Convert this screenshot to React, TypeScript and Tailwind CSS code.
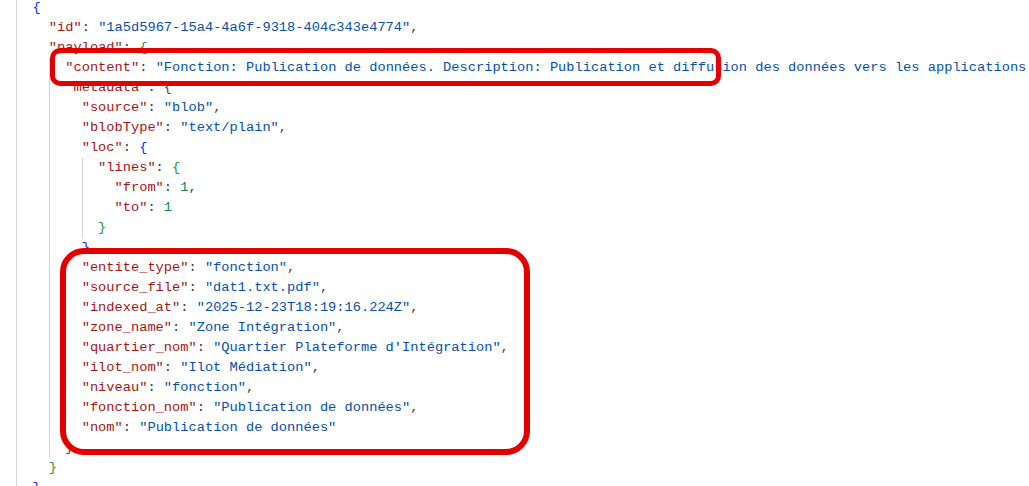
import React from "react";

type Tok = { t: string; c: string };

const K = "text-[#a31515]";
const S = "text-[#0451a5]";
const N = "text-[#098658]";
const P = "text-[#3b3b3b]";
const B1 = "text-[#0431fa]";
const B2 = "text-[#319331]";
const B3 = "text-[#7b3814]";

const kv = (k: string, v: string, comma = true, vc = S): Tok[] => [
  { t: `"${k}"`, c: K },
  { t: ": ", c: P },
  { t: v, c: vc },
  ...(comma ? [{ t: ",", c: P }] : []),
];

const lines: { indent: number; toks: Tok[] }[] = [
  { indent: 2, toks: [{ t: "{", c: B1 }] },
  { indent: 4, toks: kv("id", '"1a5d5967-15a4-4a6f-9318-404c343e4774"') },
  { indent: 4, toks: [{ t: '"payload"', c: K }, { t: ": ", c: P }, { t: "{", c: B2 }] },
  {
    indent: 6,
    toks: kv(
      "content",
      '"Fonction: Publication de données. Description: Publication et diffusion des données vers les applications consommatrices."'
    ),
  },
  { indent: 6, toks: [{ t: '"metadata"', c: K }, { t: ": ", c: P }, { t: "{", c: B3 }] },
  { indent: 8, toks: kv("source", '"blob"') },
  { indent: 8, toks: kv("blobType", '"text/plain"') },
  { indent: 8, toks: [{ t: '"loc"', c: K }, { t: ": ", c: P }, { t: "{", c: B1 }] },
  { indent: 10, toks: [{ t: '"lines"', c: K }, { t: ": ", c: P }, { t: "{", c: B2 }] },
  { indent: 12, toks: kv("from", "1", true, N) },
  { indent: 12, toks: kv("to", "1", false, N) },
  { indent: 10, toks: [{ t: "}", c: B2 }] },
  { indent: 8, toks: [{ t: "}", c: B1 }, { t: ",", c: P }] },
  { indent: 8, toks: kv("entite_type", '"fonction"') },
  { indent: 8, toks: kv("source_file", '"dat1.txt.pdf"') },
  { indent: 8, toks: kv("indexed_at", '"2025-12-23T18:19:16.224Z"') },
  { indent: 8, toks: kv("zone_name", '"Zone Intégration"') },
  { indent: 8, toks: kv("quartier_nom", '"Quartier Plateforme d\'Intégration"') },
  { indent: 8, toks: kv("ilot_nom", '"Ilot Médiation"') },
  { indent: 8, toks: kv("niveau", '"fonction"') },
  { indent: 8, toks: kv("fonction_nom", '"Publication de données"') },
  { indent: 8, toks: kv("nom", '"Publication de données"', false) },
  { indent: 6, toks: [{ t: "}", c: B3 }] },
  { indent: 4, toks: [{ t: "}", c: B2 }] },
  { indent: 2, toks: [{ t: "}", c: B1 }] },
];

function Indent({ n }: { n: number }) {
  const chunks: number[] = [];
  for (let c = 0; c < n; c += 4) chunks.push(Math.min(4, n - c));
  return (
    <>
      {chunks.map((w, i) => (
        <span
          key={i}
          className={
            "inline-block h-[20px] shrink-0 border-l border-[#d4d4d4] " +
            (w === 4 ? "w-[4ch]" : "w-[2ch]")
          }
        />
      ))}
    </>
  );
}

export default function App() {
  return (
    <div className="relative w-[1029px] h-[486px] overflow-hidden bg-white">
      <div
        className="-mt-[2px] pl-[16px] text-[13.7px] leading-[20px] whitespace-pre"
        style={{ fontFamily: '"Liberation Mono", "DejaVu Sans Mono", monospace' }}
      >
        {lines.map((l, i) => (
          <div key={i} className="flex h-[20px] items-center">
            <Indent n={l.indent} />
            <span>
              {l.toks.map((tk, j) => (
                <span key={j} className={tk.c}>
                  {tk.t}
                </span>
              ))}
            </span>
          </div>
        ))}
      </div>
      <div className="absolute left-[50px] top-[48px] w-[671px] h-[38px] rounded-[10px] border-[5px] border-[#e30000]" />
      <div className="absolute left-[60px] top-[248px] w-[470px] h-[207px] rounded-[24px] border-[6px] border-[#e30000]" />
    </div>
  );
}
